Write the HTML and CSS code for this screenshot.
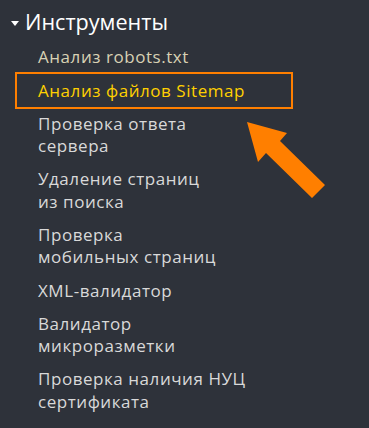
FILE: index.html
```html
<!DOCTYPE html>
<html lang="ru">
<head>
    <meta charset="UTF-8">
    <meta name="viewport" content="width=device-width, initial-scale=1.0">
    <title>Инструменты</title>
    <link rel="stylesheet" href="styles.css">
</head>
<body>
    <nav class="menu">
        <div class="menu-title">
            <span class="caret"></span>
            <span>Инструменты</span>
        </div>
        <ul class="menu-list">
            <li class="robots">Анализ robots.txt</li>
            <li class="active">Анализ файлов Sitemap</li>
            <li>Проверка ответа<br>сервера</li>
            <li>Удаление страниц<br>из поиска</li>
            <li>Проверка<br>мобильных страниц</li>
            <li>XML-валидатор</li>
            <li>Валидатор<br>микроразметки</li>
            <li>Проверка наличия НУЦ<br>сертификата</li>
        </ul>

        <!-- стрелка поверх меню -->
        <svg class="pointer" width="369" height="428" viewBox="0 0 369 428">
            <polygon points="247,122 287,133 280,141 325,185 312,198 266,153 258,162" fill="#ff7f00"/>
        </svg>
    </nav>
</body>
</html>
```

FILE: styles.css
```css
* {
    margin: 0;
    padding: 0;
    box-sizing: border-box;
}
body {
    background: #2e323a;
    font-family: "Open Sans", sans-serif;
    color: #d9d9d9;
    width: 369px;
    height: 428px;
    overflow: hidden;
}
.menu {
    position: relative;
    padding-top: 6px;
}
.menu-title {
    display: flex;
    align-items: center;
    padding-left: 11px;
    font-size: 21.6px;
    line-height: 32px;
    color: #fff;
}
.caret {
    width: 0;
    height: 0;
    border-left: 4.5px solid transparent;
    border-right: 4.5px solid transparent;
    border-top: 5px solid #fff;
    margin-right: 6px;
    margin-top: 2px;
}
.menu-list {
    list-style: none;
    padding-left: 38px;
    padding-top: 3px;
    font-size: 17px;
    letter-spacing: 0.55px;
    line-height: 22.4px;
}
.menu-list li {
    padding: 5.4px 0;
}
.menu-list .robots {
    color: #d8d1b4;
}
.menu-list .active {
    color: #ffd000;
    border: 2px solid #ff7f00;
    width: 278px;
    margin: -2px 0 -2px -23px;
    padding-left: 21px;
}
.pointer {
    position: absolute;
    top: 0;
    left: 0;
}
```
